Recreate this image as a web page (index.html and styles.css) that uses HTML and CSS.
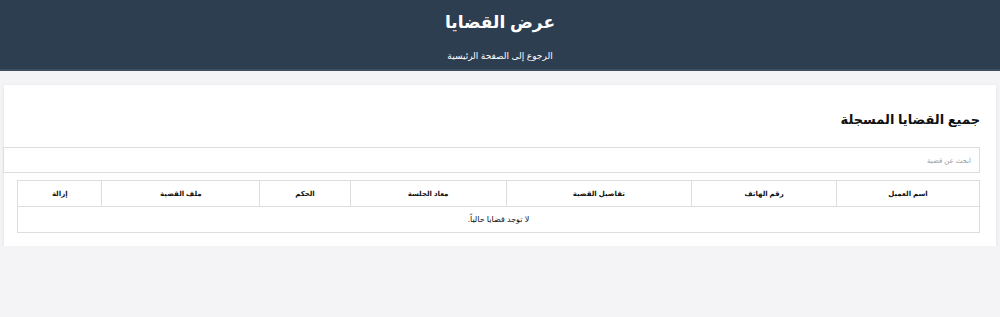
FILE: index.html
```html
<!DOCTYPE html>
<html lang="ar" dir="rtl">
<head>
  <meta charset="UTF-8" />
  <meta name="viewport" content="width=device-width, initial-scale=1.0" />
  <title>عرض القضايا</title>
  <link rel="stylesheet" href="styles.css">
</head>
<body>
  <header class="top-bar">
    <h1>عرض القضايا</h1>
    <a href="#" class="back-link">الرجوع إلى الصفحة الرئيسية</a>
  </header>

  <div class="card">
    <h2>جميع القضايا المسجلة</h2>
    <input type="text" class="search" placeholder="ابحث عن قضية" />

    <table class="cases">
      <thead>
        <tr>
          <th class="c-name">اسم العميل</th>
          <th class="c-phone">رقم الهاتف</th>
          <th class="c-details">تفاصيل القضية</th>
          <th class="c-date">معاد الجلسة</th>
          <th class="c-verdict">الحكم</th>
          <th class="c-file">ملف القضية</th>
          <th class="c-del">إزالة</th>
        </tr>
      </thead>
      <tbody>
        <tr>
          <td colspan="7">لا توجد قضايا حالياً.</td>
        </tr>
      </tbody>
    </table>
  </div>
</body>
</html>
```

FILE: styles.css
```css
body {
  margin: 0;
  font-family: Arial, "Liberation Sans", "DejaVu Sans", sans-serif;
  background: #f4f3f6;
  color: #111;
}

/* الشريط العلوي */
.top-bar {
  background: #2c3e50;
  color: #fff;
  text-align: center;
  height: 69px;
  border-bottom: 2px solid #3d4f61;
}
.top-bar h1 {
  margin: 0;
  padding-top: 12px;
  font-size: 17px;
  line-height: 22px;
}
.back-link {
  display: inline-block;
  margin-top: 17px;
  color: #fff;
  font-size: 9px;
  text-decoration: none;
}

.card {
  background: #fff;
  margin: 14px 4px 0;
  padding: 20px 16px 13px 13px;
  box-shadow: 0 1px 4px rgba(0, 0, 0, 0.08);
}
.card h2 {
  margin: 7px 0 19px;
  font-size: 13px;
  line-height: 16px;
}

.search {
  display: block;
  width: 100%;
  height: 24px;
  padding: 0 8px 0 4px;
  margin: 0 0 7px -13px;
  border: 1px solid #ddd;
  font-size: 7px;
  font-family: inherit;
}
.search::placeholder { color: #999; }

.cases {
  width: 100%;
  border-collapse: collapse;
  font-size: 8px;
}
.cases th, .cases td {
  border: 1px solid #ddd;
  text-align: center;
  height: 25px;
  padding: 0;
}
.cases th { font-weight: bold; font-size: 7px; }
.c-name { width: 143px; }
.c-phone { width: 145px; }
.c-details { width: 186px; }
.c-date { width: 156px; }
.c-verdict { width: 90px; }
.c-file { width: 158px; }
.c-del { width: 84px; }
```
